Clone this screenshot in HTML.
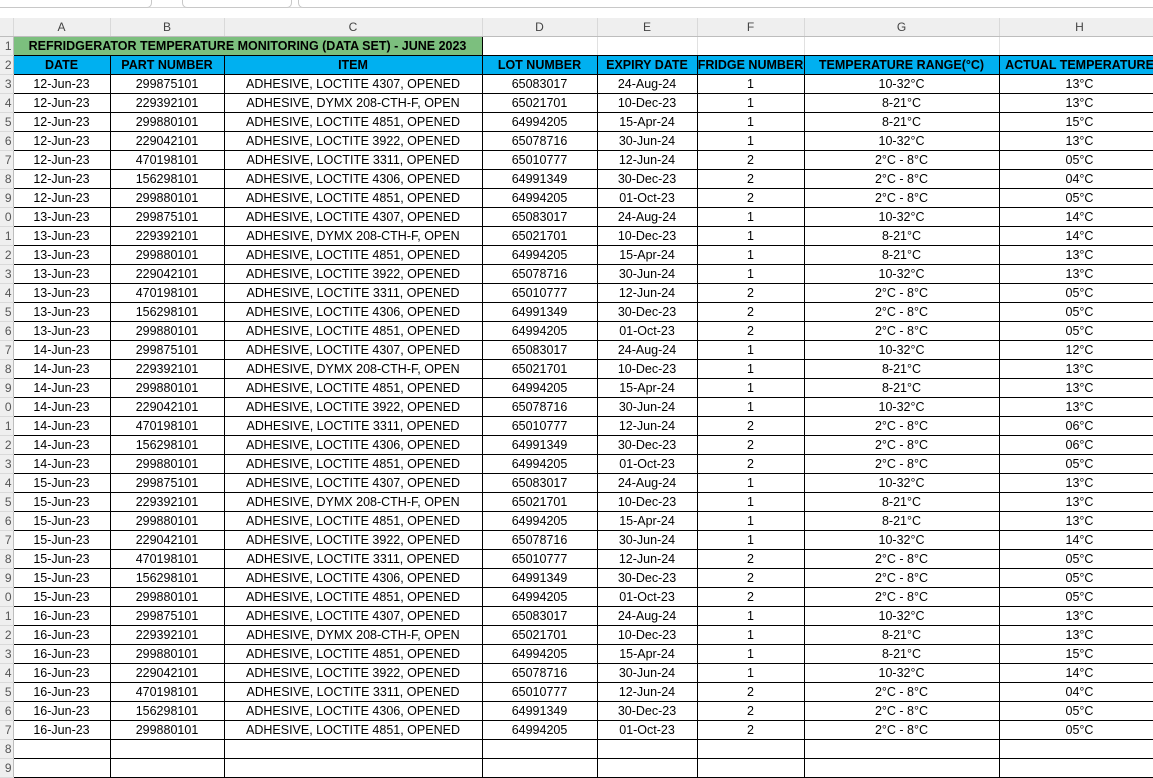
<!DOCTYPE html>
<html><head><meta charset="utf-8"><style>
body{margin:0;width:1153px;height:762px;overflow:hidden;background:#fff;font-family:"Liberation Sans",sans-serif;position:relative}
.bar{position:absolute;left:0;top:0;width:1153px;height:7px;border-bottom:1px solid #d4d4d4;background:#fff}
.bx{position:absolute;top:-6px;height:12px;border:1px solid #c8c8c8;border-radius:5px;background:#fff}
table{position:absolute;left:0;top:18px;border-collapse:collapse;table-layout:fixed;width:1160px}
td{height:18px;padding:0;font-size:12.5px;text-align:center;white-space:nowrap;overflow:hidden;border:1px solid #000;line-height:18px;color:#000}
tr.h td{background:#efefef;border:none;border-right:1px solid #d9d9d9;border-bottom:1px solid #bdbdbd;color:#444;font-size:12px}
td.r{background:#efefef;border:none;border-right:1px solid #bdbdbd;border-bottom:1px solid #d9d9d9;color:#555;font-size:12px;text-align:right;padding-right:1px}
.g{background:#7cbf7e;font-weight:bold}
.e{border:1px solid #e1e1e1;border-bottom-color:#000}
tr.b td{background:#00b0f0;font-weight:bold}
tr.b td.r{background:#efefef;font-weight:normal}
</style></head><body>
<div class="bar"><div class="bx" style="left:-10px;width:160px"></div><div class="bx" style="left:182px;width:108px"></div><div class="bx" style="left:298px;width:870px"></div></div>
<table>
<colgroup><col style="width:13px"><col style="width:97px"><col style="width:114px"><col style="width:258px"><col style="width:115px"><col style="width:100px"><col style="width:107px"><col style="width:195px"><col style="width:161px"></colgroup>
<tr class="h"><td></td><td>A</td><td>B</td><td>C</td><td>D</td><td>E</td><td>F</td><td>G</td><td>H</td></tr>
<tr><td class="r">1</td><td class="g" colspan="3">REFRIDGERATOR TEMPERATURE MONITORING (DATA SET) - JUNE 2023</td><td class="e"></td><td class="e"></td><td class="e"></td><td class="e"></td><td class="e"></td></tr>
<tr class="b"><td class="r">2</td><td>DATE</td><td>PART NUMBER</td><td>ITEM</td><td>LOT NUMBER</td><td>EXPIRY DATE</td><td>FRIDGE NUMBER</td><td>TEMPERATURE RANGE(°C)</td><td>ACTUAL TEMPERATURE</td></tr>
<tr><td class="r">3</td><td>12-Jun-23</td><td>299875101</td><td>ADHESIVE, LOCTITE 4307, OPENED</td><td>65083017</td><td>24-Aug-24</td><td>1</td><td>10-32°C</td><td>13°C</td></tr>
<tr><td class="r">4</td><td>12-Jun-23</td><td>229392101</td><td>ADHESIVE, DYMX 208-CTH-F, OPEN</td><td>65021701</td><td>10-Dec-23</td><td>1</td><td>8-21°C</td><td>13°C</td></tr>
<tr><td class="r">5</td><td>12-Jun-23</td><td>299880101</td><td>ADHESIVE, LOCTITE 4851, OPENED</td><td>64994205</td><td>15-Apr-24</td><td>1</td><td>8-21°C</td><td>15°C</td></tr>
<tr><td class="r">6</td><td>12-Jun-23</td><td>229042101</td><td>ADHESIVE, LOCTITE 3922, OPENED</td><td>65078716</td><td>30-Jun-24</td><td>1</td><td>10-32°C</td><td>13°C</td></tr>
<tr><td class="r">7</td><td>12-Jun-23</td><td>470198101</td><td>ADHESIVE, LOCTITE 3311, OPENED</td><td>65010777</td><td>12-Jun-24</td><td>2</td><td>2°C - 8°C</td><td>05°C</td></tr>
<tr><td class="r">8</td><td>12-Jun-23</td><td>156298101</td><td>ADHESIVE, LOCTITE 4306, OPENED</td><td>64991349</td><td>30-Dec-23</td><td>2</td><td>2°C - 8°C</td><td>04°C</td></tr>
<tr><td class="r">9</td><td>12-Jun-23</td><td>299880101</td><td>ADHESIVE, LOCTITE 4851, OPENED</td><td>64994205</td><td>01-Oct-23</td><td>2</td><td>2°C - 8°C</td><td>05°C</td></tr>
<tr><td class="r">0</td><td>13-Jun-23</td><td>299875101</td><td>ADHESIVE, LOCTITE 4307, OPENED</td><td>65083017</td><td>24-Aug-24</td><td>1</td><td>10-32°C</td><td>14°C</td></tr>
<tr><td class="r">1</td><td>13-Jun-23</td><td>229392101</td><td>ADHESIVE, DYMX 208-CTH-F, OPEN</td><td>65021701</td><td>10-Dec-23</td><td>1</td><td>8-21°C</td><td>14°C</td></tr>
<tr><td class="r">2</td><td>13-Jun-23</td><td>299880101</td><td>ADHESIVE, LOCTITE 4851, OPENED</td><td>64994205</td><td>15-Apr-24</td><td>1</td><td>8-21°C</td><td>13°C</td></tr>
<tr><td class="r">3</td><td>13-Jun-23</td><td>229042101</td><td>ADHESIVE, LOCTITE 3922, OPENED</td><td>65078716</td><td>30-Jun-24</td><td>1</td><td>10-32°C</td><td>13°C</td></tr>
<tr><td class="r">4</td><td>13-Jun-23</td><td>470198101</td><td>ADHESIVE, LOCTITE 3311, OPENED</td><td>65010777</td><td>12-Jun-24</td><td>2</td><td>2°C - 8°C</td><td>05°C</td></tr>
<tr><td class="r">5</td><td>13-Jun-23</td><td>156298101</td><td>ADHESIVE, LOCTITE 4306, OPENED</td><td>64991349</td><td>30-Dec-23</td><td>2</td><td>2°C - 8°C</td><td>05°C</td></tr>
<tr><td class="r">6</td><td>13-Jun-23</td><td>299880101</td><td>ADHESIVE, LOCTITE 4851, OPENED</td><td>64994205</td><td>01-Oct-23</td><td>2</td><td>2°C - 8°C</td><td>05°C</td></tr>
<tr><td class="r">7</td><td>14-Jun-23</td><td>299875101</td><td>ADHESIVE, LOCTITE 4307, OPENED</td><td>65083017</td><td>24-Aug-24</td><td>1</td><td>10-32°C</td><td>12°C</td></tr>
<tr><td class="r">8</td><td>14-Jun-23</td><td>229392101</td><td>ADHESIVE, DYMX 208-CTH-F, OPEN</td><td>65021701</td><td>10-Dec-23</td><td>1</td><td>8-21°C</td><td>13°C</td></tr>
<tr><td class="r">9</td><td>14-Jun-23</td><td>299880101</td><td>ADHESIVE, LOCTITE 4851, OPENED</td><td>64994205</td><td>15-Apr-24</td><td>1</td><td>8-21°C</td><td>13°C</td></tr>
<tr><td class="r">0</td><td>14-Jun-23</td><td>229042101</td><td>ADHESIVE, LOCTITE 3922, OPENED</td><td>65078716</td><td>30-Jun-24</td><td>1</td><td>10-32°C</td><td>13°C</td></tr>
<tr><td class="r">1</td><td>14-Jun-23</td><td>470198101</td><td>ADHESIVE, LOCTITE 3311, OPENED</td><td>65010777</td><td>12-Jun-24</td><td>2</td><td>2°C - 8°C</td><td>06°C</td></tr>
<tr><td class="r">2</td><td>14-Jun-23</td><td>156298101</td><td>ADHESIVE, LOCTITE 4306, OPENED</td><td>64991349</td><td>30-Dec-23</td><td>2</td><td>2°C - 8°C</td><td>06°C</td></tr>
<tr><td class="r">3</td><td>14-Jun-23</td><td>299880101</td><td>ADHESIVE, LOCTITE 4851, OPENED</td><td>64994205</td><td>01-Oct-23</td><td>2</td><td>2°C - 8°C</td><td>05°C</td></tr>
<tr><td class="r">4</td><td>15-Jun-23</td><td>299875101</td><td>ADHESIVE, LOCTITE 4307, OPENED</td><td>65083017</td><td>24-Aug-24</td><td>1</td><td>10-32°C</td><td>13°C</td></tr>
<tr><td class="r">5</td><td>15-Jun-23</td><td>229392101</td><td>ADHESIVE, DYMX 208-CTH-F, OPEN</td><td>65021701</td><td>10-Dec-23</td><td>1</td><td>8-21°C</td><td>13°C</td></tr>
<tr><td class="r">6</td><td>15-Jun-23</td><td>299880101</td><td>ADHESIVE, LOCTITE 4851, OPENED</td><td>64994205</td><td>15-Apr-24</td><td>1</td><td>8-21°C</td><td>13°C</td></tr>
<tr><td class="r">7</td><td>15-Jun-23</td><td>229042101</td><td>ADHESIVE, LOCTITE 3922, OPENED</td><td>65078716</td><td>30-Jun-24</td><td>1</td><td>10-32°C</td><td>14°C</td></tr>
<tr><td class="r">8</td><td>15-Jun-23</td><td>470198101</td><td>ADHESIVE, LOCTITE 3311, OPENED</td><td>65010777</td><td>12-Jun-24</td><td>2</td><td>2°C - 8°C</td><td>05°C</td></tr>
<tr><td class="r">9</td><td>15-Jun-23</td><td>156298101</td><td>ADHESIVE, LOCTITE 4306, OPENED</td><td>64991349</td><td>30-Dec-23</td><td>2</td><td>2°C - 8°C</td><td>05°C</td></tr>
<tr><td class="r">0</td><td>15-Jun-23</td><td>299880101</td><td>ADHESIVE, LOCTITE 4851, OPENED</td><td>64994205</td><td>01-Oct-23</td><td>2</td><td>2°C - 8°C</td><td>05°C</td></tr>
<tr><td class="r">1</td><td>16-Jun-23</td><td>299875101</td><td>ADHESIVE, LOCTITE 4307, OPENED</td><td>65083017</td><td>24-Aug-24</td><td>1</td><td>10-32°C</td><td>13°C</td></tr>
<tr><td class="r">2</td><td>16-Jun-23</td><td>229392101</td><td>ADHESIVE, DYMX 208-CTH-F, OPEN</td><td>65021701</td><td>10-Dec-23</td><td>1</td><td>8-21°C</td><td>13°C</td></tr>
<tr><td class="r">3</td><td>16-Jun-23</td><td>299880101</td><td>ADHESIVE, LOCTITE 4851, OPENED</td><td>64994205</td><td>15-Apr-24</td><td>1</td><td>8-21°C</td><td>15°C</td></tr>
<tr><td class="r">4</td><td>16-Jun-23</td><td>229042101</td><td>ADHESIVE, LOCTITE 3922, OPENED</td><td>65078716</td><td>30-Jun-24</td><td>1</td><td>10-32°C</td><td>14°C</td></tr>
<tr><td class="r">5</td><td>16-Jun-23</td><td>470198101</td><td>ADHESIVE, LOCTITE 3311, OPENED</td><td>65010777</td><td>12-Jun-24</td><td>2</td><td>2°C - 8°C</td><td>04°C</td></tr>
<tr><td class="r">6</td><td>16-Jun-23</td><td>156298101</td><td>ADHESIVE, LOCTITE 4306, OPENED</td><td>64991349</td><td>30-Dec-23</td><td>2</td><td>2°C - 8°C</td><td>05°C</td></tr>
<tr><td class="r">7</td><td>16-Jun-23</td><td>299880101</td><td>ADHESIVE, LOCTITE 4851, OPENED</td><td>64994205</td><td>01-Oct-23</td><td>2</td><td>2°C - 8°C</td><td>05°C</td></tr>
<tr><td class="r">8</td><td></td><td></td><td></td><td></td><td></td><td></td><td></td><td></td></tr>
<tr><td class="r">9</td><td></td><td></td><td></td><td></td><td></td><td></td><td></td><td></td></tr>
</table>
</body></html>
